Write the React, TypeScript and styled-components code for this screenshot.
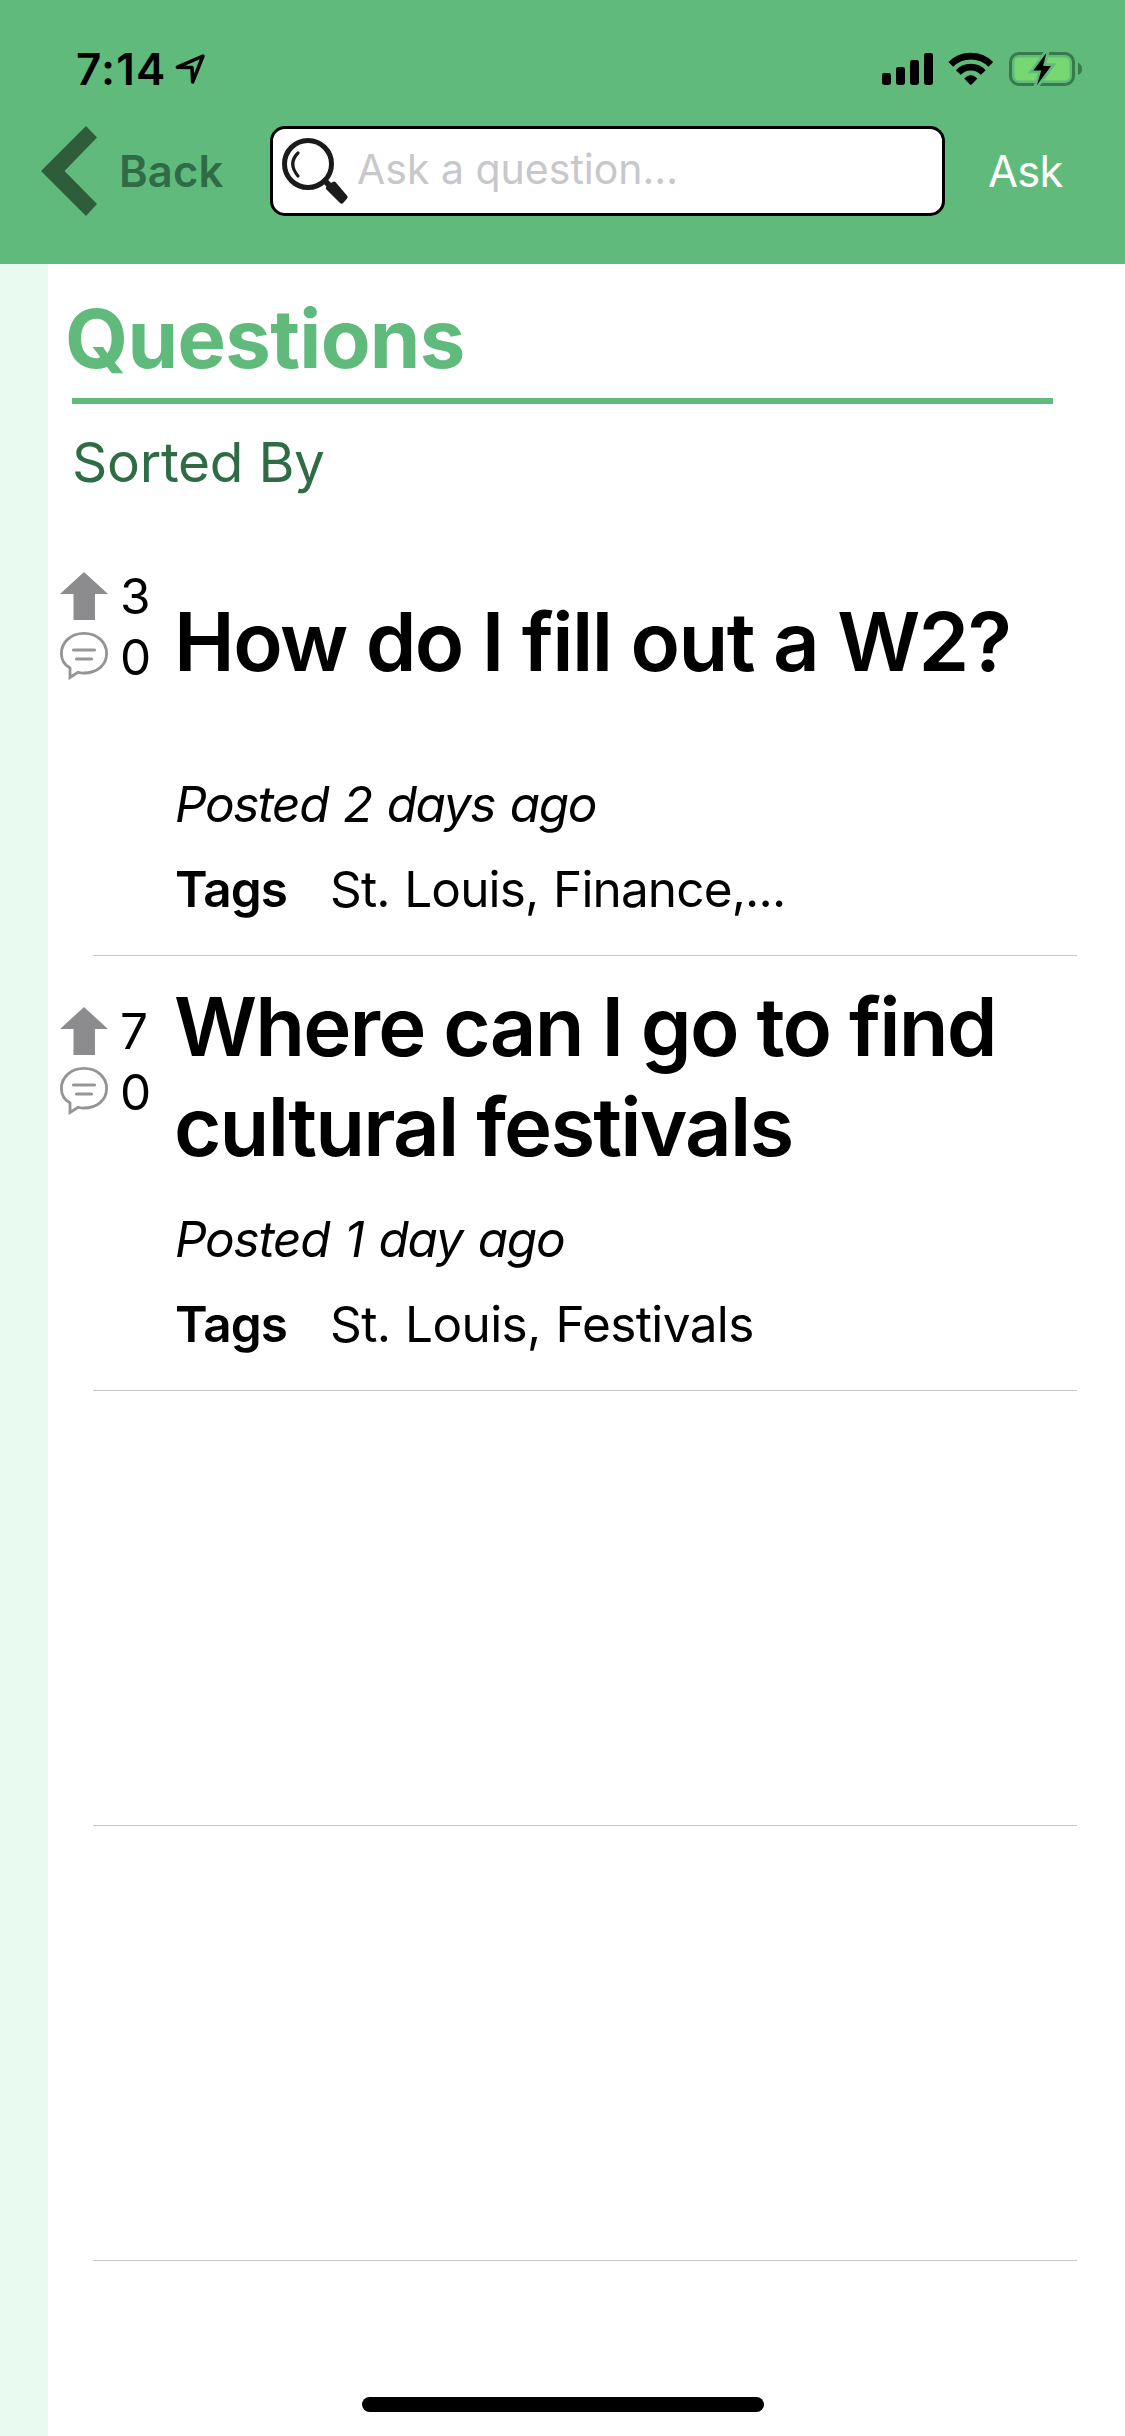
import React from "react";
import styled, { createGlobalStyle } from "styled-components";

const green = "#60ba7b";
const forest = "#2f6c45";

const Global = createGlobalStyle`
  body {
    margin: 0;
    background: #fff;
    color: #000;
    font-family: Inter, "Liberation Sans", sans-serif;
  }
`;

const Screen = styled.div`
  position: relative;
  display: flex;
  flex-direction: column;
  width: 1125px;
  height: 2436px;
  overflow: hidden;
`;

const Header = styled.header`
  box-sizing: border-box;
  display: flex;
  flex-direction: column;
  justify-content: space-between;
  height: 264px;
  padding: 43px 0 48px;
  background: ${green};
`;

const StatusBar = styled.div`
  display: flex;
  align-items: center;
  height: 52px;
  padding: 0 43px 0 76px;
`;

const Time = styled.span`
  margin-right: 8px;
  font-size: 44px;
  font-weight: 600;
  line-height: 52px;
  letter-spacing: 1.2px;
`;

const StatusIcons = styled.div`
  display: flex;
  align-items: center;
  gap: 15px;
  margin-left: auto;
`;

const NavBar = styled.nav`
  display: flex;
  align-items: center;
  height: 90px;
  padding-left: 41px;
`;

const BackButton = styled.button`
  display: flex;
  align-items: center;
  gap: 22px;
  width: 229px;
  height: 90px;
  padding: 0;
  border: 0;
  background: none;
  color: ${forest};
  font: 600 43.5px/90px Inter, sans-serif;
  letter-spacing: 0.2px;
`;

const SearchField = styled.label`
  box-sizing: border-box;
  display: flex;
  align-items: center;
  gap: 9px;
  width: 675px;
  height: 90px;
  padding: 0 9px;
  border: 3px solid #000;
  border-radius: 15px;
  background: #fff;
`;

const SearchInput = styled.input`
  flex: 1;
  min-width: 0;
  height: 80px;
  padding: 0 0 4px;
  border: 0;
  outline: 0;
  box-sizing: border-box;
  background: none;
  font: 400 41px Inter, sans-serif;
  &::placeholder {
    color: #c7c7cc;
    opacity: 1;
  }
`;

const AskButton = styled.button`
  margin-left: 43px;
  padding: 0;
  border: 0;
  background: none;
  color: #fff;
  font: 400 43.5px/90px Inter, sans-serif;
  letter-spacing: -0.7px;
`;

const Body = styled.div`
  display: flex;
  flex: 1;
`;

const SideStrip = styled.aside`
  width: 48px;
  background: #e9fbf0;
`;

const Main = styled.main`
  flex: 1;
  padding-top: 26px;
`;

const Heading = styled.h1`
  margin: 0 0 0 17px;
  color: ${green};
  font-size: 81.4px;
  font-weight: 700;
  line-height: 98px;
  letter-spacing: -0.7px;
`;

const HeadingRule = styled.div`
  width: 981px;
  height: 6px;
  margin: 10px 0 25px 24px;
  background: ${green};
`;

const SortedBy = styled.div`
  margin: 0 0 26px 24px;
  color: ${forest};
  font-size: 55px;
  line-height: 66px;
  letter-spacing: -0.3px;
`;

const Row = styled.div`
  display: flex;
  flex-direction: column;
  height: 435px;
`;

const RowContent = styled.div`
  display: flex;
  flex: 1;
  padding-left: 12px;
`;

const Divider = styled.div`
  height: 1px;
  margin: 0 48px 0 45px;
  background: #c8c7cc;
`;

const Stats = styled.div`
  display: flex;
  flex-direction: column;
  gap: 12px;
  width: 115px;
  padding-top: 51px;
`;

const Stat = styled.div`
  display: flex;
  gap: 12px;
  height: 48px;
`;

const Count = styled.span<{ $line: number }>`
  font-size: 49.5px;
  line-height: ${(p) => p.$line}px;
`;

const Details = styled.div`
  display: flex;
  flex-direction: column;
  width: 860px;
  padding-top: 21px;
`;

const Title = styled.h2<{ $tracking: number }>`
  display: flex;
  align-items: center;
  height: 200px;
  margin: 0 0 0 -1px;
  font-size: 81.4px;
  font-weight: 600;
  line-height: 100px;
  letter-spacing: ${(p) => p.$tracking}px;
`;

const Posted = styled.div<{ $tracking: number }>`
  margin-top: 32px;
  font-size: 49.5px;
  font-style: italic;
  line-height: 60px;
  letter-spacing: ${(p) => p.$tracking}px;
  word-spacing: 2.5px;
`;

const TagRow = styled.div`
  display: flex;
  margin-top: 25px;
  font-size: 49.5px;
  line-height: 60px;
`;

const TagLabel = styled.span`
  width: 155px;
  font-weight: 600;
  letter-spacing: -0.9px;
`;

const TagList = styled.span<{ $tracking: number }>`
  letter-spacing: ${(p) => p.$tracking}px;
  word-spacing: 1.5px;
`;

const HomeIndicator = styled.div`
  position: absolute;
  left: 362px;
  bottom: 24px;
  width: 402px;
  height: 15px;
  border-radius: 8px;
  background: #000;
`;

const LocationIcon = () => (
  <svg width="31" height="30" viewBox="0 0 31 30" fill="none" stroke="#000" strokeWidth="3.5" strokeLinejoin="round">
    <path d="M28 2 2.4 13.2 17 13.6 17.6 28Z" />
  </svg>
);

const SignalIcon = () => (
  <svg width="51" height="34" viewBox="0 0 51 34">
    <rect x="0" y="21" width="9" height="12" rx="2.4" />
    <rect x="14" y="15" width="9" height="18" rx="2.4" />
    <rect x="28" y="8" width="9" height="25" rx="2.4" />
    <rect x="42" y="1" width="9" height="32" rx="2.4" />
  </svg>
);

const WifiIcon = () => (
  <svg width="46" height="34" viewBox="0 0 46 34">
    <g fill="none" stroke="#000" strokeWidth="6.8">
      <path d="M2.8 12.3A28.5 28.5 0 0 1 42.8 12.3" />
      <path d="M10.3 20.5A17.4 17.4 0 0 1 35.3 20.5" />
    </g>
    <path d="M16.2 26.6Q22.8 19.5 29.4 26.6L23.6 32.5Q22.8 33.2 22 32.5Z" />
  </svg>
);

const BatteryIcon = () => {
  const bolt = "37.3,1 24.3,18.5 32.3,18.5 27.9,33.2 42,14 34.2,14";
  return (
    <svg width="73" height="34" viewBox="0 0 73 34">
      <rect x="1.5" y="1.5" width="63" height="31" rx="8.5" fill="none" stroke="#397a4d" strokeWidth="3" />
      <rect x="5.5" y="5.5" width="55" height="23" rx="4.5" fill="#77d873" />
      <path d="M69 10.7Q73 12.5 73 17T69 23Z" fill="#397a4d" />
      <polygon points={bolt} fill={green} stroke={green} strokeWidth="5.5" strokeMiterlimit="6" />
      <polygon points={bolt} />
    </svg>
  );
};

const ChevronIcon = () => (
  <svg width="56" height="90" viewBox="0 0 56 90">
    <polygon points="45,0 56,11.5 23.5,45 56,78 45,90 0,45" fill="#2f5d39" />
  </svg>
);

const MagnifierIcon = () => (
  <svg width="66" height="66" viewBox="0 0 66 66" fill="none" stroke="#1a1a1a">
    <circle cx="26" cy="26" r="23.5" strokeWidth="5" />
    <path d="M16 15Q5.5 25.5 16 38" strokeWidth="3.2" strokeLinecap="round" />
    <path d="M41 41 49 49" strokeWidth="6" />
    <polygon points="46.5,50 52,46 63,59 59.5,63" fill="#1a1a1a" strokeWidth="5" strokeLinejoin="round" />
  </svg>
);

const UpvoteIcon = () => (
  <svg width="48" height="48" viewBox="0 0 48 48">
    <polygon points="24,0 48,22 35,22 35,48 13.5,48 13.5,22 0,22" fill="#8c8c8e" />
  </svg>
);

const CommentIcon = () => (
  <svg width="48" height="48" viewBox="0 0 48 48" fill="none" stroke="#949494" strokeWidth="2.8">
    <path d="M10 36C4.5 33 1.4 27.5 1.4 21.5 1.4 10 11 1.4 24 1.4S46.6 10 46.6 21.5 37 41 24 41Q20.5 41.2 18 40.3L10 45.5Z" />
    <path d="M13.5 18H34.5M16.5 27H31.5" stroke="#979797" strokeWidth="3.2" strokeLinecap="round" />
  </svg>
);

type Question = {
  votes: number;
  comments: number;
  title: string;
  titleTracking: number;
  posted: string;
  postedTracking: number;
  tags: string;
  tagsTracking: number;
};

const questions: (Question | null)[] = [
  {
    votes: 3,
    comments: 0,
    title: "How do I fill out a W2?",
    titleTracking: -1.55,
    posted: "Posted 2 days ago",
    postedTracking: -1.45,
    tags: "St. Louis, Finance,...",
    tagsTracking: -0.85,
  },
  {
    votes: 7,
    comments: 0,
    title: "Where can I go to find cultural festivals",
    titleTracking: -1.8,
    posted: "Posted 1 day ago",
    postedTracking: -1.25,
    tags: "St. Louis, Festivals",
    tagsTracking: -0.63,
  },
  null,
  null,
];

const QuestionRow = ({ question: q }: { question: Question | null }) => (
  <Row>
    <RowContent>
      {q && (
        <>
          <Stats>
            <Stat>
              <UpvoteIcon />
              <Count $line={48}>{q.votes}</Count>
            </Stat>
            <Stat>
              <CommentIcon />
              <Count $line={50}>{q.comments}</Count>
            </Stat>
          </Stats>
          <Details>
            <Title $tracking={q.titleTracking}>{q.title}</Title>
            <Posted $tracking={q.postedTracking}>{q.posted}</Posted>
            <TagRow>
              <TagLabel>Tags</TagLabel>
              <TagList $tracking={q.tagsTracking}>{q.tags}</TagList>
            </TagRow>
          </Details>
        </>
      )}
    </RowContent>
    <Divider />
  </Row>
);

export default function App() {
  return (
    <>
      <Global />
      <Screen>
        <Header>
          <StatusBar>
            <Time>7:14</Time>
            <LocationIcon />
            <StatusIcons>
              <SignalIcon />
              <WifiIcon />
              <BatteryIcon />
            </StatusIcons>
          </StatusBar>
          <NavBar>
            <BackButton>
              <ChevronIcon />
              Back
            </BackButton>
            <SearchField>
              <MagnifierIcon />
              <SearchInput placeholder="Ask a question..." />
            </SearchField>
            <AskButton>Ask</AskButton>
          </NavBar>
        </Header>
        <Body>
          <SideStrip />
          <Main>
            <Heading>Questions</Heading>
            <HeadingRule />
            <SortedBy>Sorted By</SortedBy>
            {questions.map((question, i) => (
              <QuestionRow key={i} question={question} />
            ))}
          </Main>
        </Body>
        <HomeIndicator />
      </Screen>
    </>
  );
}
